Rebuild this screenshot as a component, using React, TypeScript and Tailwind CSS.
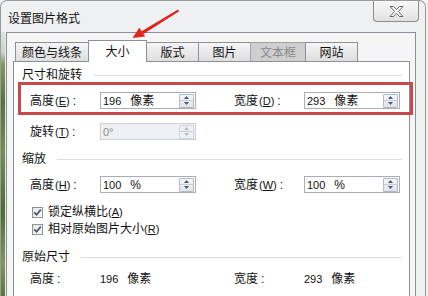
import React from "react";

function Spin({ disabled }: { disabled?: boolean }) {
  const c = disabled ? "#b4bcc6" : "#4b5b72";
  return (
    <div
      className={`flex flex-col w-[15px] h-[14px] border rounded-[1px] ${
        disabled
          ? "border-[#d3d8de] bg-[#eef0f3]"
          : "border-[#b3bac4] bg-linear-to-b from-[#f5f7fa] to-[#dfe4ea]"
      }`}
    >
      <div className="flex-1 flex items-center justify-center border-b border-[#c8cfd7]">
        <svg width="5" height="3" viewBox="0 0 5 3">
          <path d="M0 3 L2.5 0 L5 3Z" fill={c} />
        </svg>
      </div>
      <div className="flex-1 flex items-center justify-center">
        <svg width="5" height="3" viewBox="0 0 5 3">
          <path d="M0 0 L2.5 3 L5 0Z" fill={c} />
        </svg>
      </div>
    </div>
  );
}

function Field({ num, unit, disabled }: { num: string; unit?: string; disabled?: boolean }) {
  return (
    <div
      className={`flex items-center w-[96px] h-[17px] border pl-[2px] pr-[1px] ${
        disabled ? "border-[#c9d0d8] bg-[#eef0f3] text-[#8a8a8a]" : "border-[#a9adb5] bg-white text-[#111]"
      }`}
    >
      <span className="text-[11px] leading-[12px]">{num}</span>
      {unit && <span className="ml-[9px] text-[12px] leading-[12px]">{unit}</span>}
      <div className="ml-auto">
        <Spin disabled={disabled} />
      </div>
    </div>
  );
}

function Label({ name, k }: { name: string; k?: string }) {
  return (
    <div className="w-[70px] flex items-center text-[12px] leading-[12px] text-[#111]">
      <span>{name}</span>
      {k && (
        <span className="ml-[1px] text-[11px]">
          (<span className="underline">{k}</span>)
        </span>
      )}
      <span className="ml-[3px]">:</span>
    </div>
  );
}

function Header({ title }: { title: string }) {
  return (
    <div className="flex items-center h-[16px] pl-[8px] pr-[7px]">
      <span className="text-[12px] leading-[12px] text-[#111]">{title}</span>
      <div className="flex-1 h-px bg-[#d9dfe4] ml-[11px]" />
    </div>
  );
}

function Check({ label, k }: { label: string; k: string }) {
  return (
    <div className="flex items-center h-[14px] pl-[18px]">
      <div className="w-[11px] h-[11px] border border-[#939393] bg-linear-to-br from-[#e4e4e4] to-[#fbfbfb] flex items-center justify-center">
        <svg width="9" height="9" viewBox="0 0 9 9">
          <path d="M1.2 4.3 L3.6 6.8 L7.8 1.6" stroke="#4c566a" strokeWidth="1.7" fill="none" />
        </svg>
      </div>
      <span className="ml-[5px] text-[12px] leading-[12px] text-[#111]">
        {label}
        <span className="text-[11px]">
          (<span className="underline">{k}</span>)
        </span>
      </span>
    </div>
  );
}

function Tab({
  label,
  w,
  selected,
  disabled,
  first,
}: {
  label: string;
  w: string;
  selected?: boolean;
  disabled?: boolean;
  first?: boolean;
}) {
  if (selected) {
    return (
      <div
        className={`${w} -ml-[1px] h-[22px] -mb-[1px] relative z-10 border-t border-x border-[#8b9099] bg-white flex items-center justify-center text-[12px] leading-[12px] text-[#111]`}
      >
        {label}
      </div>
    );
  }
  return (
    <div
      className={`${w} ${first ? "" : "-ml-[1px]"} h-[19px] border-t border-x flex items-center justify-center pt-[1px] text-[12px] leading-[12px] ${
        disabled
          ? "border-[#a0a4aa] bg-[#cfcfcf] text-[#8b8b8b]"
          : "border-[#8b9099] bg-linear-to-b from-[#f5f5f5] to-[#dedede] text-[#111]"
      }`}
    >
      {label}
    </div>
  );
}

export default function App() {
  return (
    <div className="w-[428px] h-[296px] overflow-hidden relative bg-[#f2f2f2] [font-family:'Liberation_Sans','Noto_Sans_CJK_SC',sans-serif]">
      <div className="w-[426px] h-[296px] border-t border-x border-[#9a9a9a] rounded-t-[7px] bg-[#eef0f1] flex flex-col">
        {/* title bar */}
        <div className="h-[31px] flex items-start">
          <span className="mt-[12px] ml-[7px] text-[12px] leading-[12px] text-[#111]">设置图片格式</span>
          <div className="ml-auto mr-[6px] w-[46px] h-[21px] border-x border-b border-[#8d8d8d] rounded-b-[4px] bg-linear-to-b from-[#f8f8f8] to-[#e2e2e2] flex items-center justify-center">
            <svg width="15" height="11" viewBox="0 0 15 11">
              <path
                d="M1 0.5 H4.6 L7.5 3.6 L10.4 0.5 H14 L9.4 5.5 L14 10.5 H10.4 L7.5 7.4 L4.6 10.5 H1 L5.6 5.5 Z"
                fill="#f6f6f6"
                stroke="#666"
                strokeWidth="1"
              />
            </svg>
          </div>
        </div>
        {/* body */}
        <div className="flex flex-1">
          <div className="w-[5px] border-r border-[#e6ebe4] bg-[linear-gradient(to_bottom,#dfe3e6_0px,#cdd3cc_20px,#7f9a6a_32px,#55743f_70px,#6f8f55_120px,#4c6b3a_180px,#7a985f_230px,#58773f_264px)]" />
          <div className="flex-1 border-t border-x border-[#8b9097] bg-[#f5f5f5] flex flex-col pl-[6px] pr-[5px] pt-[7px]">
            <div className="flex items-end h-[21px] ml-[2px]">
              <Tab label="颜色与线条" w="w-[74px]" first />
              <Tab label="大小" w="w-[59px]" selected />
              <Tab label="版式" w="w-[53px]" />
              <Tab label="图片" w="w-[53px]" />
              <Tab label="文本框" w="w-[56px]" disabled />
              <Tab label="网站" w="w-[53px]" />
            </div>
            <div className="flex-1 border-t border-x border-[#8b9099] bg-white flex flex-col">
              <div className="mt-[5px]">
                <Header title="尺寸和旋转" />
              </div>
              <div className="mt-[9px] flex items-center h-[17px] pl-[16px]">
                <Label name="高度" k="E" />
                <Field num="196" unit="像素" />
                <div className="w-[38px]" />
                <Label name="宽度" k="D" />
                <Field num="293" unit="像素" />
              </div>
              <div className="mt-[14px] flex items-center h-[17px] pl-[16px]">
                <Label name="旋转" k="T" />
                <Field num="0°" disabled />
              </div>
              <div className="mt-[11px]">
                <Header title="缩放" />
              </div>
              <div className="mt-[9px] flex items-center h-[17px] pl-[16px]">
                <Label name="高度" k="H" />
                <Field num="100" unit="%" />
                <div className="w-[38px]" />
                <Label name="宽度" k="W" />
                <Field num="100" unit="%" />
              </div>
              <div className="mt-[12px]">
                <Check label="锁定纵横比" k="A" />
              </div>
              <div className="mt-[3px]">
                <Check label="相对原始图片大小" k="R" />
              </div>
              <div className="mt-[13px]">
                <Header title="原始尺寸" />
              </div>
              <div className="mt-[5px] flex items-center h-[17px] pl-[16px] text-[#111]">
                <Label name="高度" />
                <div className="w-[96px] flex items-center">
                  <span className="text-[11px] leading-[12px]">196</span>
                  <span className="ml-[9px] text-[12px] leading-[12px]">像素</span>
                </div>
                <div className="w-[38px]" />
                <Label name="宽度" />
                <div className="w-[96px] flex items-center">
                  <span className="text-[11px] leading-[12px]">293</span>
                  <span className="ml-[9px] text-[12px] leading-[12px]">像素</span>
                </div>
              </div>
            </div>
          </div>
          <div className="w-[9px]" />
        </div>
      </div>

      {/* red annotation box */}
      <div className="absolute left-[18px] top-[82px] w-[395px] h-[33px] border-[3px] border-[#c8494b] pointer-events-none" />

      {/* red annotation arrow */}
      <svg className="absolute left-0 top-0 pointer-events-none" width="428" height="296" viewBox="0 0 428 296">
        <path d="M178 9.5 L179.2 11.2 L143.5 34 L141.6 31.2 Z" fill="#e0231f" />
        <path d="M132.5 38 L139.3 27.8 L145.2 36.6 Z" fill="#e0231f" />
      </svg>
    </div>
  );
}
